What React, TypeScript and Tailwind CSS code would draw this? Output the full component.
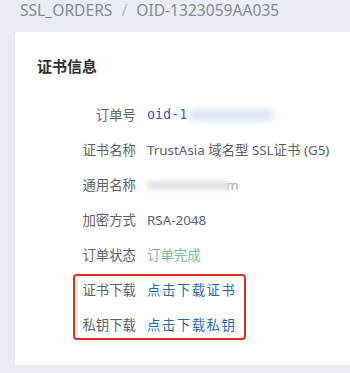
import React from 'react';

const rows = [
  { label: '订单号', kind: 'oid' },
  { label: '证书名称', kind: 'text', value: 'TrustAsia 域名型 SSL证书 (G5)' },
  { label: '通用名称', kind: 'cn' },
  { label: '加密方式', kind: 'text', value: 'RSA-2048' },
  { label: '订单状态', kind: 'status', value: '订单完成' },
];

const Row = ({ label, children }: { label: string; children: React.ReactNode }) => (
  <div className="flex items-center h-[35px]">
    <div className="w-[99px] text-right text-[13.4px] text-[#5e6166]">{label}</div>
    <div className="ml-[11px] flex items-center text-[13.4px] text-[#5e6166]">{children}</div>
  </div>
);

export default function App() {
  return (
    <div
      className="w-[350px] h-[373px] overflow-hidden bg-[#e9edf3] pl-[15px]"
      style={{ fontFamily: '"Noto Sans", "Noto Sans CJK SC", sans-serif' }}
    >
      {/* Breadcrumb */}
      <div className="h-[32px] pl-[5px] flex items-start text-[15.6px] leading-[20px] text-[#868c95]">
        <span>SSL_ORDERS</span>
        <span className="mx-[9px] text-[#b5b9c0]">/</span>
        <span>OID-1323059AA035</span>
      </div>

      {/* Card */}
      <div className="bg-white rounded-l-[3px] h-[333px] pl-[22px] pt-[23px]">
        <div className="text-[15px] leading-[22px] font-bold text-[#303133]">证书信息</div>

        <div className="mt-[21px]">
          {rows.map((r) => (
            <Row key={r.label} label={r.label}>
              {r.kind === 'oid' && (
                <>
                  <span className="text-[#2c64b4]" style={{ fontFamily: '"DejaVu Sans Mono", monospace' }}>
                    oid-1
                  </span>
                  <span className="ml-[2px] w-[84px] h-[12px] rounded-[4px] bg-[#dbe4f6] blur-[3px]" />
                </>
              )}
              {r.kind === 'text' && <span>{r.value}</span>}
              {r.kind === 'cn' && (
                <>
                  <span className="w-[82px] h-[9px] rounded-[3px] bg-[#e0e3e8] blur-[2px]" />
                  <span className="text-[#a9aeb5] -ml-[3px]">m</span>
                </>
              )}
              {r.kind === 'status' && <span className="text-[#72bd8e]">{r.value}</span>}
            </Row>
          ))}

          <div className="relative">
            <Row label="证书下载">
              <span className="text-[#1f6bb5] tracking-[1.5px]">点击下载证书</span>
            </Row>
            <Row label="私钥下载">
              <span className="text-[#1f6bb5] tracking-[1.5px]">点击下载私钥</span>
            </Row>
            <span className="absolute left-[36px] top-[1px] w-[173px] h-[66px] border-2 border-[#e12a24] rounded-[4px]" />
          </div>
        </div>
      </div>
    </div>
  );
}
